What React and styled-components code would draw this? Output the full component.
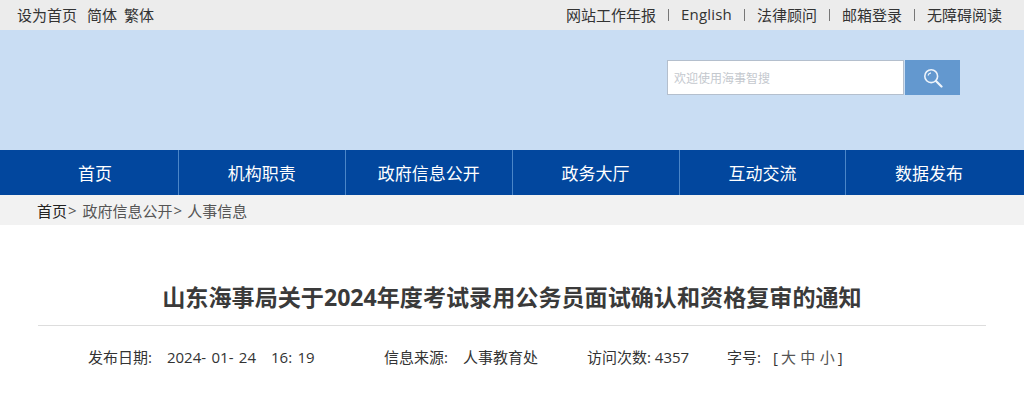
import React from "react";
import styled, { createGlobalStyle } from "styled-components";

const Global = createGlobalStyle`
  html, body { margin: 0; padding: 0; background: #fff; }
  body { font-family: "Open Sans", "Noto Sans CJK SC", sans-serif; color: #333; overflow: hidden; }
  * { box-sizing: border-box; }
`;
const Page = styled.div`width: 1024px; height: 400px; overflow: hidden;`;
const TopBar = styled.div`
  height: 30px; background: #ececec; display: flex; justify-content: space-between; align-items: center;
  padding: 0 22px 2px 17px; font-size: 15px; color: #333;
`;
const TopLeft = styled.div`display: flex; gap: 10px;`;
const TraditionalLink = styled.span`margin-left: -3px;`;
const TopRight = styled.div`display: flex; align-items: center;`;
const Sep = styled.span`width: 1px; height: 12px; background: #777; margin: 2px 12px 0;`;
const EnglishLink = styled.span`letter-spacing: 0.2px;`;
const Banner = styled.div`
  height: 120px; background: #c9ddf3; display: flex; justify-content: flex-end; align-items: flex-start;
  padding: 30px 64px 0 0;
`;
const SearchInput = styled.div`
  width: 237px; height: 35px; background: #fff; border: 1px solid #b4bfcd; color: #c4c8ce;
  font-size: 12px; display: flex; align-items: center; padding-left: 6px;
`;
const SearchButton = styled.div`
  width: 55px; height: 35px; margin-left: 1px; background: #6398cf; display: flex; align-items: center; justify-content: center;
`;
const Nav = styled.nav`height: 45px; background: #02479e; display: flex; padding-left: 12px;`;
const NavItem = styled.div`
  flex: 0 0 166.9px; display: flex; align-items: center; justify-content: center; color: #fff; font-size: 17px;
  border-right: ${p => (p.$last ? "none" : "1px solid #4b86c8")};
  padding-right: ${p => (p.$last ? "2px" : "0")};
`;
const Crumbs = styled.div`
  height: 30px; background: #f2f2f2; padding-left: 37px; display: flex; align-items: center; font-size: 15px; color: #555;
`;
const CrumbHome = styled.span`color: #222;`;
const CrumbArrow = styled.span`margin-left: 1px;`;
const CrumbLink = styled.span`margin-left: ${p => p.$gap}px;`;
const Article = styled.div`padding: 0 38px;`;
const Title = styled.h1`
  margin: 0; padding-top: 54px; height: 101px; border-bottom: 1px solid #ddd; text-align: center;
  font-size: 23.1px; line-height: 36px; font-weight: 700; color: #3a3a3a; white-space: nowrap;
`;
const Meta = styled.div`
  display: flex; align-items: center; height: 64px; padding: 0 0 4px 50px; font-size: 15px; color: #333;
`;
const MetaItem = styled.span`flex: 0 0 ${p => p.$w}px; white-space: pre;`;
const MetaValue = styled.span`margin-left: ${p => p.$gap}px; word-spacing: 1.5px;`;
const Sizes = styled.span`color: #555; margin: 0 3px 0 3px; word-spacing: 0.5px;`;

const links = ["网站工作年报", "English", "法律顾问", "邮箱登录", "无障碍阅读"];
const nav = ["首页", "机构职责", "政府信息公开", "政务大厅", "互动交流", "数据发布"];

export default function App() {
  return (
    <Page>
      <Global />
      <TopBar>
        <TopLeft><span>设为首页</span><span>简体</span><TraditionalLink>繁体</TraditionalLink></TopLeft>
        <TopRight>
          {links.map((l, i) => (
            <React.Fragment key={l}>
              {i > 0 && <Sep />}
              {l === "English" ? <EnglishLink>{l}</EnglishLink> : <span>{l}</span>}
            </React.Fragment>
          ))}
        </TopRight>
      </TopBar>
      <Banner>
        <SearchInput>欢迎使用海事智搜</SearchInput>
        <SearchButton>
          <svg width="20" height="20" viewBox="0 0 20 20" fill="none" stroke="#eef4fb">
            <circle cx="8.2" cy="8.2" r="6.4" strokeWidth="1.6" />
            <path d="M5 7.5a3.4 3.4 0 0 1 3-2.6" strokeWidth="1.1" />
            <path d="M13 13l5.5 5.5" strokeWidth="2.2" strokeLinecap="round" />
          </svg>
        </SearchButton>
      </Banner>
      <Nav>
        {nav.map((n, i) => <NavItem key={n} $last={i === nav.length - 1}>{n}</NavItem>)}
      </Nav>
      <Crumbs>
        <CrumbHome>首页</CrumbHome><CrumbArrow>&gt;</CrumbArrow>
        <CrumbLink $gap={6}>政府信息公开</CrumbLink><CrumbArrow>&gt;</CrumbArrow>
        <CrumbLink $gap={5}>人事信息</CrumbLink>
      </Crumbs>
      <Article>
        <Title>山东海事局关于2024年度考试录用公务员面试确认和资格复审的通知</Title>
        <Meta>
          <MetaItem $w={296}>发布日期:<MetaValue $gap={15}>2024- 01- 24</MetaValue><MetaValue $gap={15}>16: 19</MetaValue></MetaItem>
          <MetaItem $w={203}>信息来源:<MetaValue $gap={15}>人事教育处</MetaValue></MetaItem>
          <MetaItem $w={140}>访问次数: 4357</MetaItem>
          <MetaItem $w={130}>字号:<MetaValue $gap={12}>[</MetaValue><Sizes>大 中 小</Sizes>]</MetaItem>
        </Meta>
      </Article>
    </Page>
  );
}
